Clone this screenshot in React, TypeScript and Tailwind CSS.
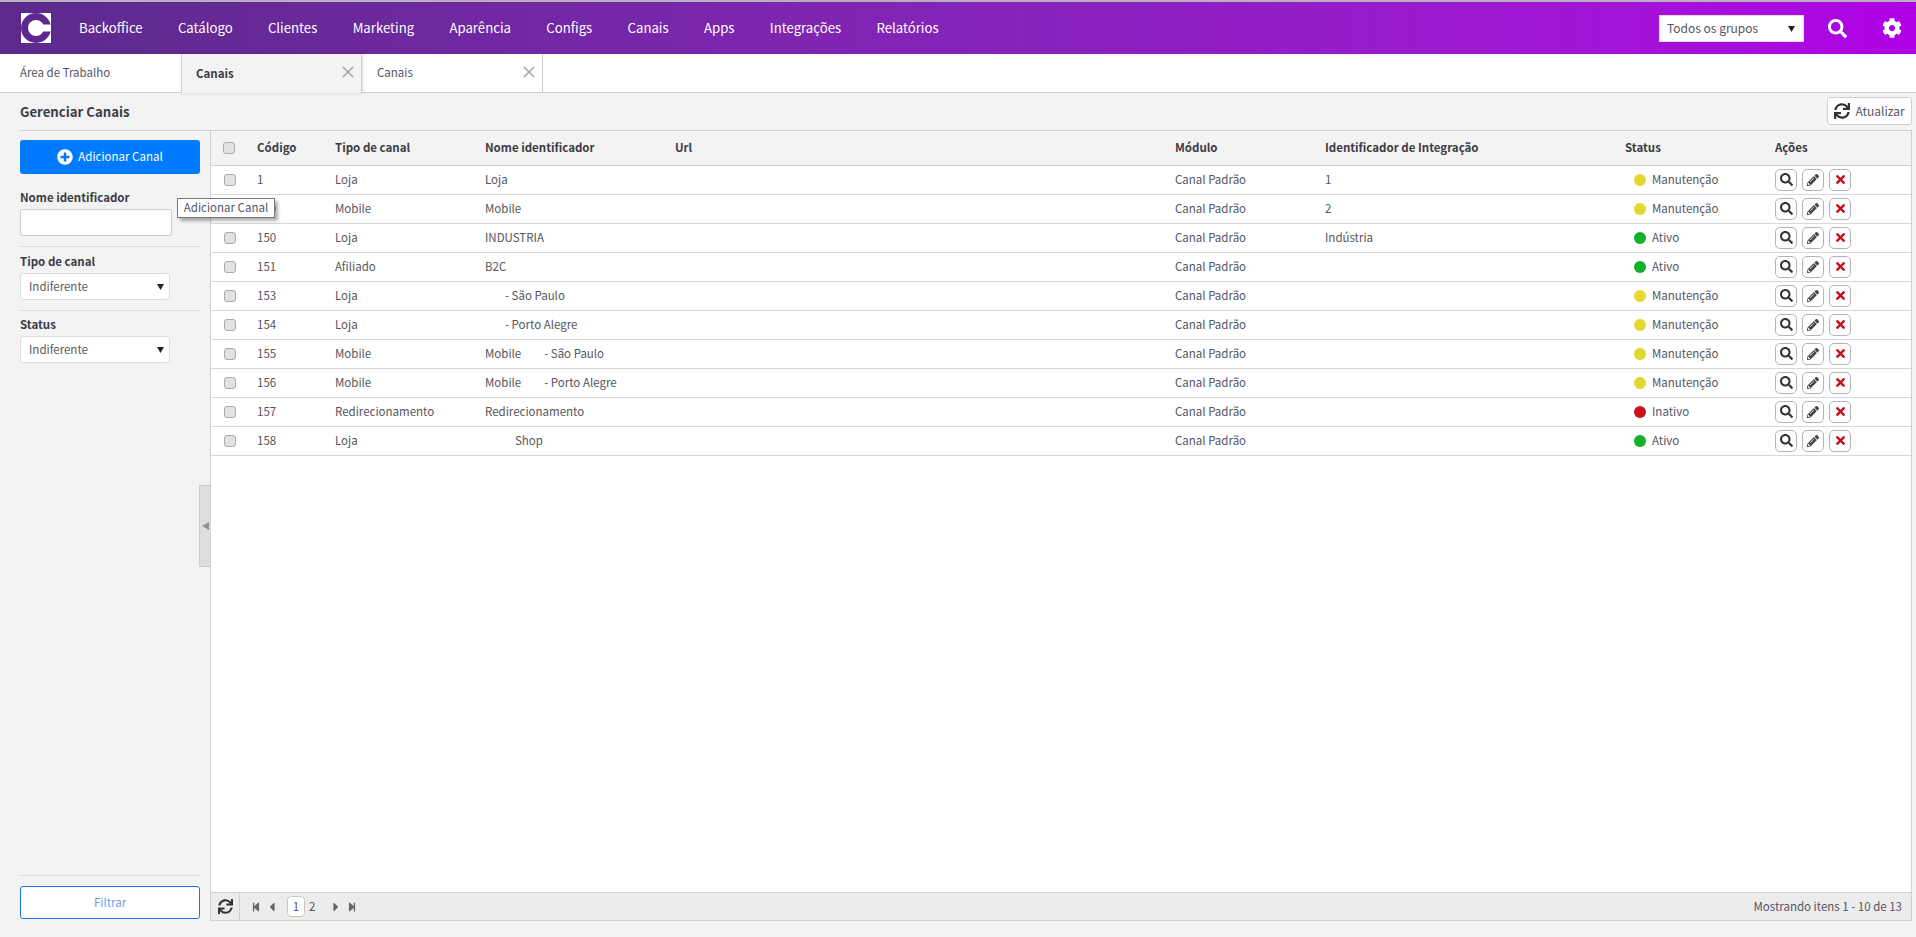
import React from 'react';
import { FaCaretLeft, FaCaretRight, FaCog, FaPencilAlt, FaPlusCircle, FaSearch, FaStepBackward, FaStepForward, FaSync, FaTimes } from 'react-icons/fa';

const NAV_ITEMS = ['Backoffice', 'Catálogo', 'Clientes', 'Marketing', 'Aparência', 'Configs', 'Canais', 'Apps', 'Integrações', 'Relatórios'];

type Row = {
    code: string;
    type: string;
    name: React.ReactNode;
    integration: string;
    status: 'Manutenção' | 'Ativo' | 'Inativo';
};

const ROWS: Row[] = [
    { code: '1', type: 'Loja', name: 'Loja', integration: '1', status: 'Manutenção' },
    { code: '149', type: 'Mobile', name: 'Mobile', integration: '2', status: 'Manutenção' },
    { code: '150', type: 'Loja', name: 'INDUSTRIA', integration: 'Indústria', status: 'Ativo' },
    { code: '151', type: 'Afiliado', name: 'B2C', integration: '', status: 'Ativo' },
    { code: '153', type: 'Loja', name: <span className="pl-[20px]">- São Paulo</span>, integration: '', status: 'Manutenção' },
    { code: '154', type: 'Loja', name: <span className="pl-[20px]">- Porto Alegre</span>, integration: '', status: 'Manutenção' },
    { code: '155', type: 'Mobile', name: <>Mobile<span className="pl-[23px]">- São Paulo</span></>, integration: '', status: 'Manutenção' },
    { code: '156', type: 'Mobile', name: <>Mobile<span className="pl-[23px]">- Porto Alegre</span></>, integration: '', status: 'Manutenção' },
    { code: '157', type: 'Redirecionamento', name: 'Redirecionamento', integration: '', status: 'Inativo' },
    { code: '158', type: 'Loja', name: <span className="pl-[30px]">Shop</span>, integration: '', status: 'Ativo' },
];

const STATUS_DOT = {
    'Manutenção': 'bg-[#e3d82f]',
    'Ativo': 'bg-[#12b12a]',
    'Inativo': 'bg-[#c8141a]',
};

const Checkbox = () => (
    <span className="block w-[12px] h-[12px] rounded-[3px] border border-[#aaaaaa] bg-[#e2e2e2]" />
);

const SelectBox = ({ label }: { label: string }) => (
    <div className="w-[150px] h-[27px] pl-[8px] pr-[5px] flex items-center justify-between bg-white border border-[#dddddd] rounded-[3px] text-[#5a5a64]">
        <span>{label}</span>
        <svg width="7" height="7" viewBox="0 0 7 7"><polygon points="0,1 7,1 3.5,7" fill="#222222" /></svg>
    </div>
);

const ActionButton = ({ children }: { children: React.ReactNode }) => (
    <button className="w-[22px] h-[22px] flex items-center justify-center bg-white border border-[#b5b5b5] rounded-[5px]">
        {children}
    </button>
);

const TabClose = () => (
    <svg className="mr-[7px] mb-[3px]" width="12" height="12" viewBox="0 0 12 12">
        <path d="M1 1 L11 11 M11 1 L1 11" stroke="#9a9a9a" strokeWidth="1.3" fill="none" />
    </svg>
);

export default function App() {
    return (
        <div className="h-[937px] flex flex-col bg-[#f3f3f3] text-[11.5px] text-[#55555f] font-['Noto_Sans_CJK_SC','Noto_Sans',sans-serif] overflow-hidden">
            {/* Top bar */}
            <header className="h-[54px] shrink-0 flex items-center border-t-2 border-[#b9b0bd] bg-gradient-to-r from-[#5b2a8c] to-[#b000e6] text-white">
                <svg className="ml-[21px] shrink-0" width="30" height="30" viewBox="0 0 30 30">
                    <rect width="30" height="30" fill="#ffffff" />
                    <circle cx="15" cy="15" r="15" fill="#5f2690" />
                    <circle cx="15" cy="15" r="8" fill="#ffffff" />
                    <rect x="15" y="11.5" width="15" height="7" fill="#ffffff" />
                </svg>
                <nav className="ml-[28px] flex gap-[35.3px] text-[13.2px]">
                    {NAV_ITEMS.map(item => <span key={item}>{item}</span>)}
                </nav>
                <div className="ml-auto w-[145px] h-[27px] pl-[7px] pr-[8px] flex items-center justify-between bg-white border border-[#dddddd] text-[12px] text-[#55555f]">
                    <span>Todos os grupos</span>
                    <svg width="7" height="7" viewBox="0 0 7 7"><polygon points="0,1 7,1 3.5,7" fill="#222222" /></svg>
                </div>
                <FaSearch className="ml-[24px] text-[19px]" />
                <FaCog className="ml-[35px] mr-[14px] text-[20px]" />
            </header>

            {/* Tabs */}
            <div className="h-[39px] shrink-0 flex bg-white border-b border-[#cfcfcf]">
                <div className="w-[181px] pl-[20px] flex items-center">Área de Trabalho</div>
                <div className="relative w-[181px] h-[39px] pl-[14px] flex items-center justify-between bg-[#f3f3f3] border-x border-[#cfcfcf] shadow-[1px_0_3px_rgba(0,0,0,0.15)]">
                    <span className="font-bold text-[#3c3c44]">Canais</span>
                    <TabClose />
                </div>
                <div className="w-[181px] pl-[15px] flex items-center justify-between border-r border-[#cfcfcf]">
                    <span>Canais</span>
                    <TabClose />
                </div>
            </div>

            {/* Page title */}
            <div className="h-[38px] shrink-0 ml-[20px] mr-[4px] flex items-center justify-between border-b border-[#d0d0d0]">
                <h1 className="text-[13.2px] font-bold text-[#3c3c44]">Gerenciar Canais</h1>
                <button className="w-[85px] h-[28px] mb-[1px] flex items-center justify-center gap-[5px] bg-white border border-[#d0d0d0] rounded-[3px] text-[12px]">
                    <FaSync className="text-[16px] text-[#333333]" />
                    <span>Atualizar</span>
                </button>
            </div>

            <div className="relative flex-1 min-h-0 flex mb-[16px]">
                {/* Filters */}
                <aside className="w-[210px] shrink-0 pl-[20px] pr-[10px] pt-[9px] flex flex-col">
                    <button className="h-[34px] flex items-center justify-center gap-[5px] rounded-[3px] bg-[#007bff] text-white">
                        <FaPlusCircle className="text-[16px]" />
                        <span>Adicionar Canal</span>
                    </button>
                    <label className="mt-[13px] leading-[20px] font-bold text-[#3c3c44]">Nome identificador</label>
                    <input className="w-[152px] h-[27px] mt-[2px] bg-white border border-[#cccccc] rounded-[3px]" />
                    <hr className="mt-[10px] border-[#dcdcdc]" />
                    <label className="mt-[4px] leading-[20px] font-bold text-[#3c3c44]">Tipo de canal</label>
                    <div className="mt-[2px]"><SelectBox label="Indiferente" /></div>
                    <hr className="mt-[10px] border-[#dcdcdc]" />
                    <label className="mt-[3px] leading-[20px] font-bold text-[#3c3c44]">Status</label>
                    <div className="mt-[2px]"><SelectBox label="Indiferente" /></div>
                    <hr className="mt-auto border-[#dcdcdc]" />
                    <button className="h-[33px] mt-[10px] mb-[2px] bg-white border-[1.5px] border-[#1a78e6] rounded-[3px] text-[#6f9cf5]">Filtrar</button>
                </aside>

                {/* Collapse handle */}
                <div className="absolute left-[199px] top-[354px] w-[11px] h-[82px] flex items-center justify-center bg-[#dedede] border border-r-0 border-[#cccccc]">
                    <svg width="7" height="8" viewBox="0 0 7 8"><polygon points="0,4 7,0 7,8" fill="#8f8f8f" /></svg>
                </div>

                {/* Tooltip */}
                <div className="absolute left-[177px] top-[67px] z-10 w-[98px] h-[20px] flex items-center justify-center bg-white border border-[#777777] leading-none shadow-[3px_3px_3px_rgba(0,0,0,0.3)] whitespace-nowrap">
                    Adicionar Canal
                </div>

                {/* Grid */}
                <main className="flex-1 min-w-0 mr-[4px] flex flex-col border-x border-b border-[#d0d0d0] bg-white">
                    <div className="flex-1 min-h-0">
                        <table className="w-full table-fixed border-collapse text-left">
                            <colgroup>
                                <col className="w-[46px]" />
                                <col className="w-[78px]" />
                                <col className="w-[150px]" />
                                <col className="w-[190px]" />
                                <col className="w-[500px]" />
                                <col className="w-[150px]" />
                                <col className="w-[300px]" />
                                <col className="w-[150px]" />
                                <col />
                            </colgroup>
                            <thead>
                                <tr className="h-[34px] bg-[#f3f3f3] border-b border-[#d0d0d0] font-bold text-[#3c3c44]">
                                    <th className="pl-[12px]"><Checkbox /></th>
                                    <th>Código</th>
                                    <th>Tipo de canal</th>
                                    <th>Nome identificador</th>
                                    <th>Url</th>
                                    <th>Módulo</th>
                                    <th>Identificador de Integração</th>
                                    <th>Status</th>
                                    <th>Ações</th>
                                </tr>
                            </thead>
                            <tbody>
                                {ROWS.map(row => (
                                    <tr key={row.code} className="h-[29px] border-b border-[#d8d8d8]">
                                        <td className="pl-[13px]"><Checkbox /></td>
                                        <td>{row.code}</td>
                                        <td>{row.type}</td>
                                        <td>{row.name}</td>
                                        <td />
                                        <td>Canal Padrão</td>
                                        <td>{row.integration}</td>
                                        <td>
                                            <div className="pl-[9px] flex items-center gap-[6px]">
                                                <span className={`w-[12px] h-[12px] rounded-full ${STATUS_DOT[row.status]}`} />
                                                <span>{row.status}</span>
                                            </div>
                                        </td>
                                        <td>
                                            <div className="flex gap-[5px]">
                                                <ActionButton><FaSearch className="text-[13px] text-[#333333]" /></ActionButton>
                                                <ActionButton><FaPencilAlt className="text-[12px] text-[#444444]" /></ActionButton>
                                                <ActionButton><FaTimes className="text-[13px] text-[#c80f1e]" /></ActionButton>
                                            </div>
                                        </td>
                                    </tr>
                                ))}
                            </tbody>
                        </table>
                    </div>

                    {/* Pager */}
                    <div className="h-[28px] shrink-0 flex items-center bg-[#ececec] border-t border-[#d0d0d0]">
                        <div className="w-[29px] h-full flex items-center justify-center border-r border-[#d0d0d0]">
                            <FaSync className="text-[15px] text-[#333333]" />
                        </div>
                        <FaStepBackward className="ml-[11px] text-[10px] text-[#666666]" />
                        <FaCaretLeft className="ml-[4px] text-[14px] text-[#666666]" />
                        <span className="ml-[8px] w-[18px] h-[21px] flex items-center justify-center bg-white border border-[#c9c9b8] rounded-[4px]">1</span>
                        <span className="ml-[4px]">2</span>
                        <FaCaretRight className="ml-[14px] text-[14px] text-[#666666]" />
                        <FaStepForward className="ml-[4px] text-[10px] text-[#666666]" />
                        <span className="ml-auto mr-[9px]">Mostrando itens 1 - 10 de 13</span>
                    </div>
                </main>
            </div>
        </div>
    );
}
